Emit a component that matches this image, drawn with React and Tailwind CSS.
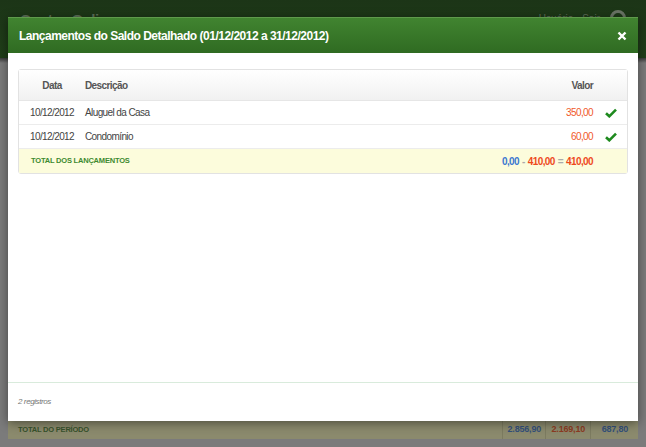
import React from "react";

const font = { fontFamily: '"Liberation Sans", Arial, sans-serif' };

const rows = [
  { data: "10/12/2012", desc: "Aluguel da Casa", valor: "350,00" },
  { data: "10/12/2012", desc: "Condomínio", valor: "60,00" },
];

const Check = () => (
  <svg width="12" height="10" viewBox="0 0 12 10">
    <path d="M1 5.2 L4.3 8.3 L11 1.6" fill="none" stroke="#1e8a1e" strokeWidth="2.6" />
  </svg>
);

const Close = () => (
  <svg width="10" height="10" viewBox="0 0 10 10">
    <path d="M1.5 1.5 L8.5 8.5 M8.5 1.5 L1.5 8.5" stroke="#fff" strokeWidth="2.4" />
  </svg>
);

const App = () => {
  return (
    <div className="relative w-[646px] h-[447px] overflow-hidden bg-[#7b7b7b]" style={font}>
      {/* pagina por tras do modal */}
      <div className="h-[58px] bg-gradient-to-b from-[#1c3517] to-[#203e19] flex items-start justify-between px-[20px] pt-[9px]">
        <span className="text-[15px] font-bold text-[#5d6f57] tracking-[-0.5px]">Contas Online</span>
        <div className="flex items-center gap-[10px] pt-[1px]">
          <span className="text-[10px] text-[#5f6d59]">Usuário · Sair</span>
          <div className="w-[16px] h-[16px] rounded-full border-[3px] border-[#6b7566]" />
        </div>
      </div>
      <div className="h-[5px] bg-gradient-to-b from-[#3a3a3a] to-[#7b7b7b]" />
      <div className="px-[8px] pt-[358px]">
        <div className="flex h-[18px] bg-[#8b8a6d] items-center text-[7.5px] font-bold tracking-[-0.2px]">
          <span className="flex-1 pl-[10px] text-[#38522c]">TOTAL DO PERÍODO</span>
          <span className="w-[43px] h-full flex items-center justify-end pr-[4px] border-l border-[#7c7b60] text-[#34507a] text-[9px]">2.856,90</span>
          <span className="w-[45px] h-full flex items-center justify-end pr-[5px] border-l border-[#7c7b60] text-[#8c3b22] text-[9px]">2.169,10</span>
          <span className="w-[48px] h-full flex items-center justify-end pr-[10px] border-l border-[#7c7b60] text-[#34507a] text-[9px]">687,80</span>
        </div>
      </div>

      {/* modal */}
      <div className="absolute left-[8px] top-[17px] w-[630px] h-[404px] bg-white flex flex-col shadow-[0_2px_10px_rgba(0,0,0,0.45)]">
        <div className="h-[36px] flex items-center justify-between pl-[11px] pr-[11px] bg-gradient-to-b from-[#418430] to-[#2f6b22] border-t border-[#5f9a4c]">
          <h1 className="text-[12px] font-bold text-white tracking-[-0.5px]">
            Lançamentos do Saldo Detalhado (01/12/2012 a 31/12/2012)
          </h1>
          <Close />
        </div>

        <div className="flex-1 px-[10px] pt-[16px]">
          <div className="border border-[#e2e2e2] rounded-[3px] text-[10px] tracking-[-0.6px] text-[#444]">
            <div className="flex items-center h-[31px] bg-gradient-to-b from-[#ffffff] to-[#f1f1f1] font-bold text-[#555] border-b border-[#e6e6e6]">
              <span className="w-[66px] text-center">Data</span>
              <span className="flex-1">Descrição</span>
              <span className="pr-[34px]">Valor</span>
            </div>
            {rows.map((r) => (
              <div key={r.desc} className="flex items-center h-[24px] border-b border-[#ececec]">
                <span className="w-[66px] text-center">{r.data}</span>
                <span className="flex-1">{r.desc}</span>
                <span className="text-[#f0582a]">{r.valor}</span>
                <span className="w-[34px] flex justify-center pl-[2px]">
                  <Check />
                </span>
              </div>
            ))}
            <div className="flex items-center h-[24px] bg-[#fcfcdc] font-bold">
              <span className="flex-1 pl-[12px] text-[7.5px] tracking-[-0.2px] text-[#3e8a30]">TOTAL DOS LANÇAMENTOS</span>
              <span className="flex items-center gap-[3px] pr-[34px]">
                <span className="text-[#3a78d0]">0,00</span>
                <span className="text-[#aaa]">-</span>
                <span className="text-[#ee4a1c]">410,00</span>
                <span className="text-[#aaa]">=</span>
                <span className="text-[#ee4a1c]">410,00</span>
              </span>
            </div>
          </div>
        </div>

        <div className="h-[39px] border-t border-[#d9ebdc] flex items-center pl-[10px]">
          <span className="text-[8px] italic text-[#777] tracking-[-0.4px]">2 registros</span>
        </div>
      </div>
    </div>
  );
};

export default App;
